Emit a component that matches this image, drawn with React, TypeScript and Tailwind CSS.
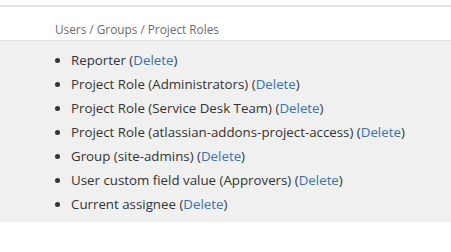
import React from "react";

const items: { label: string }[] = [
  { label: "Reporter" },
  { label: "Project Role (Administrators)" },
  { label: "Project Role (Service Desk Team)" },
  { label: "Project Role (atlassian-addons-project-access)" },
  { label: "Group (site-admins)" },
  { label: "User custom field value (Approvers)" },
  { label: "Current assignee" },
];

export default function App() {
  return (
    <div
      className="w-[451px] h-[252px] bg-white overflow-hidden"
      style={{ fontFamily: '"Open Sans", "Noto Sans", sans-serif' }}
    >
      <div className="h-[5px]" />
      <div className="h-[2px] bg-[#e4e4e4]" />
      <div className="h-[33px] pl-[55px] pt-[14px] text-[11.8px] leading-[16px] text-[#6b6b6b]">
        Users / Groups / Project Roles
      </div>
      <div className="border-t border-[#e2e2e2] bg-[#f0f0f0] h-[182px] pt-[7px]">
        <ul className="pl-[71px] list-disc text-[13.3px] leading-[24px] text-[#333333] marker:text-[#333333]">
          {items.map((it) => (
            <li key={it.label}>
              {it.label} (<a className="text-[#3572b0]">Delete</a>)
            </li>
          ))}
        </ul>
      </div>
    </div>
  );
}
